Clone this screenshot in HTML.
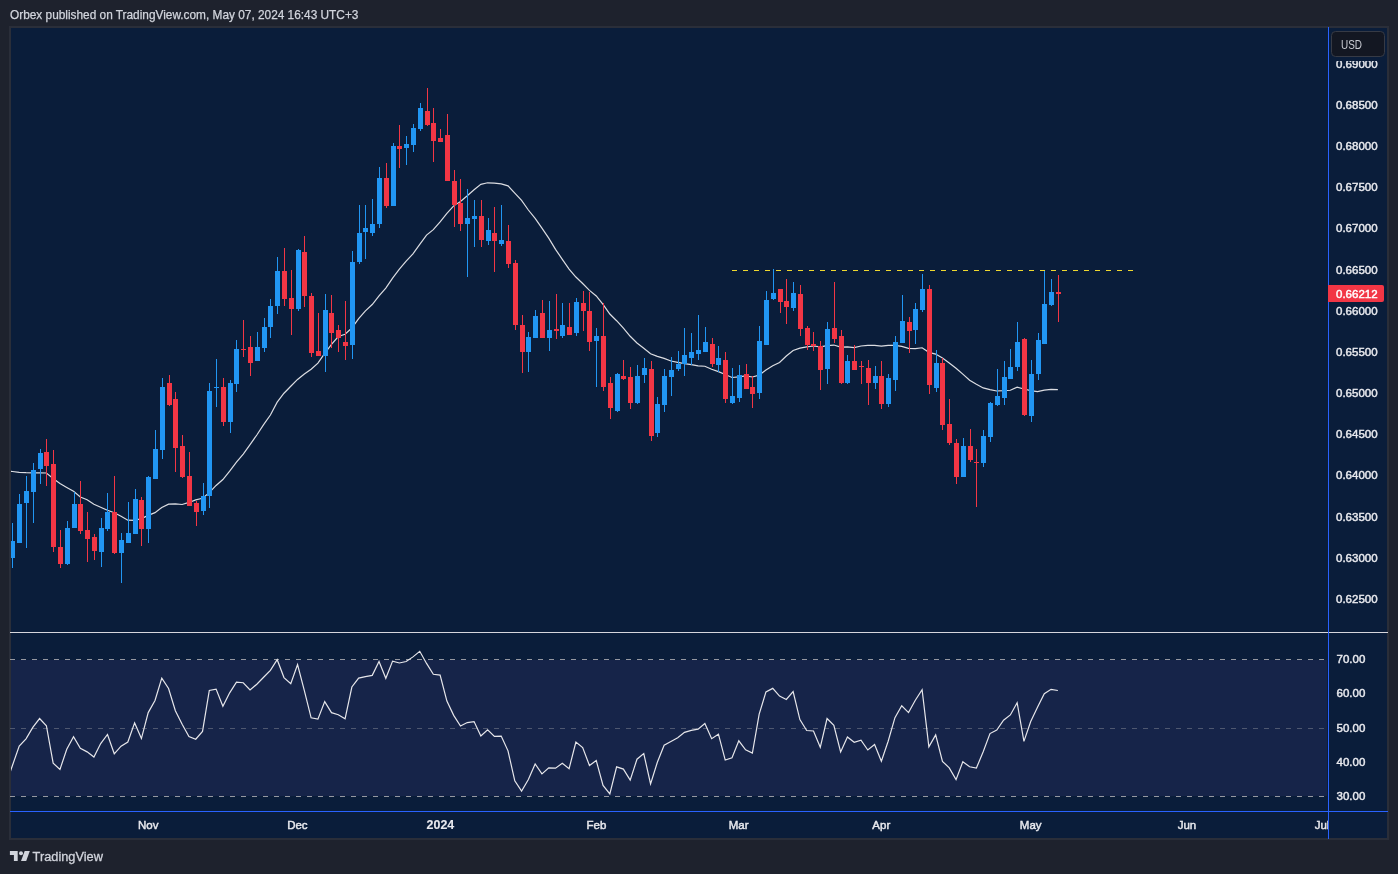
<!DOCTYPE html><html><head><meta charset="utf-8"><style>
html,body{margin:0;padding:0;width:1398px;height:874px;overflow:hidden;background:#1e222d;}
svg{position:absolute;left:0;top:0;will-change:transform;}
text{font-family:"Liberation Sans",sans-serif;}
</style></head><body>
<svg width="1398" height="874" viewBox="0 0 1398 874">
<rect x="0" y="0" width="1398" height="874" fill="#1e222d"/>
<rect x="9" y="26" width="1380" height="814" fill="#2a2e39" shape-rendering="crispEdges"/>
<rect x="11" y="28" width="1376" height="810" fill="#0a1d3a" shape-rendering="crispEdges"/>
<text x="10" y="18.8" font-size="11.85" fill="#d1d4dc" stroke="#d1d4dc" stroke-width="0.25">Orbex published on TradingView.com, May 07, 2024 16:43 UTC+3</text>
<rect x="11" y="660" width="1316" height="136" fill="#162449" shape-rendering="crispEdges"/>
<line x1="10" y1="659.5" x2="1327" y2="659.5" stroke="#9598a1" stroke-width="1" stroke-dasharray="5 6" shape-rendering="crispEdges"/>
<line x1="10" y1="728.5" x2="1327" y2="728.5" stroke="#4f5870" stroke-width="1" stroke-dasharray="5 6" shape-rendering="crispEdges"/>
<line x1="10" y1="796.5" x2="1327" y2="796.5" stroke="#9598a1" stroke-width="1" stroke-dasharray="5 6" shape-rendering="crispEdges"/>
<defs><clipPath id="mp"><rect x="11" y="28" width="1317" height="604"/></clipPath>
<clipPath id="rp"><rect x="11" y="633" width="1317" height="178"/></clipPath>
<clipPath id="tp"><rect x="11" y="812" width="1317" height="26"/></clipPath></defs>
<g clip-path="url(#mp)">
<line x1="732" y1="270.5" x2="1133" y2="270.5" stroke="#efd82f" stroke-width="1" stroke-dasharray="5 6" shape-rendering="crispEdges"/>
<polyline points="5.65,471.30 12.44,471.50 19.23,472.30 26.01,472.70 32.80,472.80 39.59,472.80 46.38,473.00 53.17,478.50 59.96,483.50 66.75,487.50 73.53,491.30 80.32,497.00 87.11,499.80 93.90,504.30 100.69,507.30 107.48,510.30 114.27,512.70 121.05,516.20 127.84,520.20 134.63,520.30 141.42,518.58 148.21,515.38 155.00,512.63 161.78,507.42 168.57,504.17 175.36,503.92 182.15,504.49 188.94,502.44 195.73,499.85 202.52,498.25 209.30,492.61 216.09,485.43 222.88,479.57 229.67,471.18 236.46,462.23 243.25,454.12 250.04,444.64 256.82,434.99 263.61,424.68 270.40,415.03 277.19,402.14 283.98,393.24 290.77,386.25 297.55,379.41 304.34,373.94 311.13,369.18 317.92,363.11 324.71,353.33 331.50,344.41 338.29,336.50 345.07,334.25 351.86,327.99 358.65,318.55 365.44,310.80 372.23,304.55 379.02,295.94 385.81,288.09 392.59,278.04 399.38,269.16 406.17,261.05 412.96,253.89 419.75,244.33 426.54,235.13 433.32,229.66 440.11,221.97 446.90,213.38 453.69,205.84 460.48,201.54 467.27,195.77 474.06,189.68 480.84,184.38 487.63,182.78 494.42,183.18 501.21,183.80 508.00,185.80 514.79,193.16 521.58,200.44 528.36,210.01 535.15,218.36 541.94,228.06 548.73,238.18 555.52,249.32 562.31,259.33 569.09,269.02 575.88,277.03 582.67,283.52 589.46,290.37 596.25,295.97 603.04,304.42 609.83,314.02 616.61,320.72 623.40,328.16 630.19,336.27 636.98,343.04 643.77,348.24 650.56,353.79 657.35,356.40 664.13,358.35 670.92,361.04 677.71,362.32 684.50,363.56 691.29,364.62 698.08,365.87 704.86,366.24 711.65,369.31 718.44,371.66 725.23,374.50 732.02,377.50 738.81,376.92 745.60,375.97 752.38,376.97 759.17,375.08 765.96,369.93 772.75,365.78 779.54,362.51 786.33,356.05 793.12,350.50 799.90,348.14 806.69,346.91 813.48,346.01 820.27,346.77 827.06,345.61 833.85,345.05 840.63,347.10 847.42,346.97 854.21,347.58 861.00,346.00 867.79,345.35 874.58,345.39 881.37,346.14 888.15,345.34 894.94,345.39 901.73,346.44 908.52,348.34 915.31,348.67 922.10,347.77 928.88,352.36 935.67,354.06 942.46,358.06 949.25,362.92 956.04,368.27 962.83,374.13 969.62,380.17 976.40,384.17 983.19,387.93 989.98,389.56 996.77,391.01 1003.56,390.71 1010.35,390.24 1017.14,387.13 1023.92,388.99 1030.71,390.58 1037.50,391.52 1044.29,390.18 1051.08,389.30 1057.87,389.53" fill="none" stroke="#dcdde2" stroke-width="1.2"/>
<g shape-rendering="crispEdges">
<rect x="12" y="523" width="1" height="45" fill="#2196f3"/>
<rect x="10" y="541" width="5" height="17" fill="#2196f3"/>
<rect x="19" y="494" width="1" height="49" fill="#2196f3"/>
<rect x="17" y="504" width="5" height="39" fill="#2196f3"/>
<rect x="26" y="476" width="1" height="72" fill="#2196f3"/>
<rect x="24" y="491" width="5" height="12" fill="#2196f3"/>
<rect x="33" y="463" width="1" height="60" fill="#2196f3"/>
<rect x="31" y="470" width="5" height="22" fill="#2196f3"/>
<rect x="40" y="449" width="1" height="35" fill="#2196f3"/>
<rect x="38" y="453" width="5" height="16" fill="#2196f3"/>
<rect x="46" y="439" width="1" height="47" fill="#f23645"/>
<rect x="44" y="452" width="5" height="14" fill="#f23645"/>
<rect x="53" y="450" width="1" height="102" fill="#f23645"/>
<rect x="51" y="464" width="5" height="83" fill="#f23645"/>
<rect x="60" y="530" width="1" height="38" fill="#f23645"/>
<rect x="58" y="547" width="5" height="17" fill="#f23645"/>
<rect x="67" y="521" width="1" height="44" fill="#2196f3"/>
<rect x="65" y="528" width="5" height="36" fill="#2196f3"/>
<rect x="74" y="492" width="1" height="36" fill="#2196f3"/>
<rect x="72" y="504" width="5" height="24" fill="#2196f3"/>
<rect x="80" y="481" width="1" height="53" fill="#f23645"/>
<rect x="78" y="504" width="5" height="27" fill="#f23645"/>
<rect x="87" y="512" width="1" height="50" fill="#f23645"/>
<rect x="85" y="530" width="5" height="9" fill="#f23645"/>
<rect x="94" y="534" width="1" height="26" fill="#f23645"/>
<rect x="92" y="537" width="5" height="14" fill="#f23645"/>
<rect x="101" y="518" width="1" height="49" fill="#2196f3"/>
<rect x="99" y="528" width="5" height="24" fill="#2196f3"/>
<rect x="107" y="493" width="1" height="38" fill="#2196f3"/>
<rect x="105" y="512" width="5" height="17" fill="#2196f3"/>
<rect x="114" y="476" width="1" height="78" fill="#f23645"/>
<rect x="112" y="512" width="5" height="41" fill="#f23645"/>
<rect x="121" y="533" width="1" height="50" fill="#2196f3"/>
<rect x="119" y="540" width="5" height="13" fill="#2196f3"/>
<rect x="128" y="502" width="1" height="41" fill="#2196f3"/>
<rect x="126" y="533" width="5" height="10" fill="#2196f3"/>
<rect x="135" y="489" width="1" height="45" fill="#2196f3"/>
<rect x="133" y="499" width="5" height="35" fill="#2196f3"/>
<rect x="141" y="497" width="1" height="49" fill="#f23645"/>
<rect x="139" y="500" width="5" height="29" fill="#f23645"/>
<rect x="148" y="476" width="1" height="67" fill="#2196f3"/>
<rect x="146" y="477" width="5" height="52" fill="#2196f3"/>
<rect x="155" y="430" width="1" height="49" fill="#2196f3"/>
<rect x="153" y="449" width="5" height="30" fill="#2196f3"/>
<rect x="162" y="378" width="1" height="81" fill="#2196f3"/>
<rect x="160" y="387" width="5" height="63" fill="#2196f3"/>
<rect x="169" y="375" width="1" height="31" fill="#f23645"/>
<rect x="167" y="383" width="5" height="22" fill="#f23645"/>
<rect x="175" y="392" width="1" height="80" fill="#f23645"/>
<rect x="173" y="399" width="5" height="49" fill="#f23645"/>
<rect x="182" y="435" width="1" height="43" fill="#f23645"/>
<rect x="180" y="446" width="5" height="31" fill="#f23645"/>
<rect x="189" y="452" width="1" height="54" fill="#f23645"/>
<rect x="187" y="476" width="5" height="30" fill="#f23645"/>
<rect x="196" y="501" width="1" height="25" fill="#f23645"/>
<rect x="194" y="503" width="5" height="9" fill="#f23645"/>
<rect x="203" y="483" width="1" height="32" fill="#2196f3"/>
<rect x="201" y="496" width="5" height="15" fill="#2196f3"/>
<rect x="209" y="383" width="1" height="125" fill="#2196f3"/>
<rect x="207" y="391" width="5" height="105" fill="#2196f3"/>
<rect x="216" y="359" width="1" height="48" fill="#2196f3"/>
<rect x="214" y="387" width="5" height="1" fill="#2196f3"/>
<rect x="223" y="378" width="1" height="48" fill="#f23645"/>
<rect x="221" y="387" width="5" height="35" fill="#f23645"/>
<rect x="230" y="380" width="1" height="53" fill="#2196f3"/>
<rect x="228" y="383" width="5" height="39" fill="#2196f3"/>
<rect x="236" y="340" width="1" height="52" fill="#2196f3"/>
<rect x="234" y="349" width="5" height="35" fill="#2196f3"/>
<rect x="243" y="320" width="1" height="37" fill="#f23645"/>
<rect x="241" y="349" width="5" height="1" fill="#f23645"/>
<rect x="250" y="336" width="1" height="40" fill="#f23645"/>
<rect x="248" y="347" width="5" height="16" fill="#f23645"/>
<rect x="257" y="332" width="1" height="29" fill="#2196f3"/>
<rect x="255" y="347" width="5" height="14" fill="#2196f3"/>
<rect x="264" y="318" width="1" height="34" fill="#2196f3"/>
<rect x="262" y="327" width="5" height="21" fill="#2196f3"/>
<rect x="270" y="299" width="1" height="39" fill="#2196f3"/>
<rect x="268" y="306" width="5" height="21" fill="#2196f3"/>
<rect x="277" y="257" width="1" height="57" fill="#2196f3"/>
<rect x="275" y="271" width="5" height="35" fill="#2196f3"/>
<rect x="284" y="248" width="1" height="58" fill="#f23645"/>
<rect x="282" y="271" width="5" height="28" fill="#f23645"/>
<rect x="291" y="270" width="1" height="65" fill="#f23645"/>
<rect x="289" y="298" width="5" height="11" fill="#f23645"/>
<rect x="298" y="249" width="1" height="62" fill="#2196f3"/>
<rect x="296" y="250" width="5" height="59" fill="#2196f3"/>
<rect x="304" y="236" width="1" height="71" fill="#f23645"/>
<rect x="302" y="252" width="5" height="44" fill="#f23645"/>
<rect x="311" y="293" width="1" height="64" fill="#f23645"/>
<rect x="309" y="296" width="5" height="57" fill="#f23645"/>
<rect x="318" y="313" width="1" height="43" fill="#f23645"/>
<rect x="316" y="351" width="5" height="5" fill="#f23645"/>
<rect x="325" y="294" width="1" height="78" fill="#2196f3"/>
<rect x="323" y="310" width="5" height="46" fill="#2196f3"/>
<rect x="331" y="295" width="1" height="53" fill="#f23645"/>
<rect x="329" y="313" width="5" height="20" fill="#f23645"/>
<rect x="338" y="325" width="1" height="27" fill="#f23645"/>
<rect x="336" y="330" width="5" height="8" fill="#f23645"/>
<rect x="345" y="301" width="1" height="59" fill="#f23645"/>
<rect x="343" y="342" width="5" height="4" fill="#f23645"/>
<rect x="352" y="251" width="1" height="108" fill="#2196f3"/>
<rect x="350" y="262" width="5" height="83" fill="#2196f3"/>
<rect x="359" y="205" width="1" height="59" fill="#2196f3"/>
<rect x="357" y="233" width="5" height="29" fill="#2196f3"/>
<rect x="365" y="205" width="1" height="54" fill="#2196f3"/>
<rect x="363" y="228" width="5" height="4" fill="#2196f3"/>
<rect x="372" y="199" width="1" height="37" fill="#2196f3"/>
<rect x="370" y="224" width="5" height="9" fill="#2196f3"/>
<rect x="379" y="167" width="1" height="61" fill="#2196f3"/>
<rect x="377" y="178" width="5" height="46" fill="#2196f3"/>
<rect x="386" y="163" width="1" height="45" fill="#f23645"/>
<rect x="384" y="178" width="5" height="28" fill="#f23645"/>
<rect x="393" y="143" width="1" height="63" fill="#2196f3"/>
<rect x="391" y="146" width="5" height="60" fill="#2196f3"/>
<rect x="399" y="125" width="1" height="43" fill="#f23645"/>
<rect x="397" y="146" width="5" height="3" fill="#f23645"/>
<rect x="406" y="136" width="1" height="29" fill="#2196f3"/>
<rect x="404" y="144" width="5" height="4" fill="#2196f3"/>
<rect x="413" y="124" width="1" height="28" fill="#2196f3"/>
<rect x="411" y="128" width="5" height="17" fill="#2196f3"/>
<rect x="420" y="103" width="1" height="28" fill="#2196f3"/>
<rect x="418" y="108" width="5" height="21" fill="#2196f3"/>
<rect x="427" y="88" width="1" height="38" fill="#f23645"/>
<rect x="425" y="111" width="5" height="14" fill="#f23645"/>
<rect x="433" y="108" width="1" height="54" fill="#f23645"/>
<rect x="431" y="123" width="5" height="18" fill="#f23645"/>
<rect x="440" y="129" width="1" height="13" fill="#f23645"/>
<rect x="438" y="138" width="5" height="4" fill="#f23645"/>
<rect x="447" y="114" width="1" height="67" fill="#f23645"/>
<rect x="445" y="135" width="5" height="46" fill="#f23645"/>
<rect x="454" y="170" width="1" height="57" fill="#f23645"/>
<rect x="452" y="181" width="5" height="24" fill="#f23645"/>
<rect x="460" y="179" width="1" height="52" fill="#f23645"/>
<rect x="458" y="203" width="5" height="21" fill="#f23645"/>
<rect x="467" y="189" width="1" height="88" fill="#2196f3"/>
<rect x="465" y="218" width="5" height="6" fill="#2196f3"/>
<rect x="474" y="200" width="1" height="47" fill="#2196f3"/>
<rect x="472" y="216" width="5" height="3" fill="#2196f3"/>
<rect x="481" y="200" width="1" height="47" fill="#f23645"/>
<rect x="479" y="216" width="5" height="24" fill="#f23645"/>
<rect x="488" y="218" width="1" height="27" fill="#2196f3"/>
<rect x="486" y="230" width="5" height="11" fill="#2196f3"/>
<rect x="494" y="207" width="1" height="65" fill="#f23645"/>
<rect x="492" y="233" width="5" height="8" fill="#f23645"/>
<rect x="501" y="205" width="1" height="41" fill="#2196f3"/>
<rect x="499" y="240" width="5" height="4" fill="#2196f3"/>
<rect x="508" y="225" width="1" height="43" fill="#f23645"/>
<rect x="506" y="241" width="5" height="23" fill="#f23645"/>
<rect x="515" y="260" width="1" height="70" fill="#f23645"/>
<rect x="513" y="263" width="5" height="62" fill="#f23645"/>
<rect x="522" y="315" width="1" height="58" fill="#f23645"/>
<rect x="520" y="325" width="5" height="27" fill="#f23645"/>
<rect x="528" y="332" width="1" height="40" fill="#2196f3"/>
<rect x="526" y="337" width="5" height="15" fill="#2196f3"/>
<rect x="535" y="310" width="1" height="28" fill="#2196f3"/>
<rect x="533" y="316" width="5" height="22" fill="#2196f3"/>
<rect x="542" y="300" width="1" height="38" fill="#f23645"/>
<rect x="540" y="313" width="5" height="25" fill="#f23645"/>
<rect x="549" y="301" width="1" height="50" fill="#2196f3"/>
<rect x="547" y="330" width="5" height="8" fill="#2196f3"/>
<rect x="556" y="294" width="1" height="45" fill="#f23645"/>
<rect x="554" y="329" width="5" height="2" fill="#f23645"/>
<rect x="562" y="303" width="1" height="35" fill="#2196f3"/>
<rect x="560" y="325" width="5" height="11" fill="#2196f3"/>
<rect x="569" y="303" width="1" height="32" fill="#f23645"/>
<rect x="567" y="327" width="5" height="8" fill="#f23645"/>
<rect x="576" y="298" width="1" height="38" fill="#2196f3"/>
<rect x="574" y="302" width="5" height="31" fill="#2196f3"/>
<rect x="583" y="291" width="1" height="40" fill="#f23645"/>
<rect x="581" y="303" width="5" height="8" fill="#f23645"/>
<rect x="589" y="292" width="1" height="59" fill="#f23645"/>
<rect x="587" y="311" width="5" height="31" fill="#f23645"/>
<rect x="596" y="328" width="1" height="59" fill="#2196f3"/>
<rect x="594" y="336" width="5" height="5" fill="#2196f3"/>
<rect x="603" y="303" width="1" height="88" fill="#f23645"/>
<rect x="601" y="336" width="5" height="51" fill="#f23645"/>
<rect x="610" y="377" width="1" height="42" fill="#f23645"/>
<rect x="608" y="383" width="5" height="25" fill="#f23645"/>
<rect x="617" y="373" width="1" height="39" fill="#2196f3"/>
<rect x="615" y="374" width="5" height="37" fill="#2196f3"/>
<rect x="623" y="360" width="1" height="20" fill="#f23645"/>
<rect x="621" y="376" width="5" height="3" fill="#f23645"/>
<rect x="630" y="367" width="1" height="42" fill="#f23645"/>
<rect x="628" y="377" width="5" height="26" fill="#f23645"/>
<rect x="637" y="365" width="1" height="39" fill="#2196f3"/>
<rect x="635" y="376" width="5" height="27" fill="#2196f3"/>
<rect x="644" y="358" width="1" height="25" fill="#2196f3"/>
<rect x="642" y="368" width="5" height="7" fill="#2196f3"/>
<rect x="651" y="361" width="1" height="80" fill="#f23645"/>
<rect x="649" y="369" width="5" height="67" fill="#f23645"/>
<rect x="657" y="397" width="1" height="40" fill="#2196f3"/>
<rect x="655" y="404" width="5" height="29" fill="#2196f3"/>
<rect x="664" y="369" width="1" height="43" fill="#2196f3"/>
<rect x="662" y="376" width="5" height="29" fill="#2196f3"/>
<rect x="671" y="357" width="1" height="39" fill="#2196f3"/>
<rect x="669" y="370" width="5" height="7" fill="#2196f3"/>
<rect x="678" y="351" width="1" height="20" fill="#2196f3"/>
<rect x="676" y="364" width="5" height="5" fill="#2196f3"/>
<rect x="684" y="328" width="1" height="48" fill="#2196f3"/>
<rect x="682" y="355" width="5" height="9" fill="#2196f3"/>
<rect x="691" y="333" width="1" height="32" fill="#2196f3"/>
<rect x="689" y="352" width="5" height="6" fill="#2196f3"/>
<rect x="698" y="315" width="1" height="45" fill="#2196f3"/>
<rect x="696" y="350" width="5" height="4" fill="#2196f3"/>
<rect x="705" y="327" width="1" height="25" fill="#2196f3"/>
<rect x="703" y="342" width="5" height="10" fill="#2196f3"/>
<rect x="712" y="338" width="1" height="29" fill="#f23645"/>
<rect x="710" y="344" width="5" height="20" fill="#f23645"/>
<rect x="718" y="346" width="1" height="26" fill="#2196f3"/>
<rect x="716" y="358" width="5" height="7" fill="#2196f3"/>
<rect x="725" y="352" width="1" height="51" fill="#f23645"/>
<rect x="723" y="360" width="5" height="39" fill="#f23645"/>
<rect x="732" y="368" width="1" height="36" fill="#2196f3"/>
<rect x="730" y="396" width="5" height="7" fill="#2196f3"/>
<rect x="739" y="365" width="1" height="37" fill="#2196f3"/>
<rect x="737" y="375" width="5" height="23" fill="#2196f3"/>
<rect x="746" y="364" width="1" height="25" fill="#f23645"/>
<rect x="744" y="374" width="5" height="15" fill="#f23645"/>
<rect x="752" y="376" width="1" height="32" fill="#f23645"/>
<rect x="750" y="387" width="5" height="7" fill="#f23645"/>
<rect x="759" y="326" width="1" height="73" fill="#2196f3"/>
<rect x="757" y="341" width="5" height="52" fill="#2196f3"/>
<rect x="766" y="291" width="1" height="54" fill="#2196f3"/>
<rect x="764" y="300" width="5" height="45" fill="#2196f3"/>
<rect x="773" y="269" width="1" height="31" fill="#2196f3"/>
<rect x="771" y="293" width="5" height="6" fill="#2196f3"/>
<rect x="780" y="289" width="1" height="24" fill="#f23645"/>
<rect x="778" y="289" width="5" height="13" fill="#f23645"/>
<rect x="786" y="279" width="1" height="45" fill="#f23645"/>
<rect x="784" y="301" width="5" height="6" fill="#f23645"/>
<rect x="793" y="282" width="1" height="29" fill="#2196f3"/>
<rect x="791" y="293" width="5" height="15" fill="#2196f3"/>
<rect x="800" y="285" width="1" height="51" fill="#f23645"/>
<rect x="798" y="294" width="5" height="35" fill="#f23645"/>
<rect x="807" y="326" width="1" height="24" fill="#f23645"/>
<rect x="805" y="328" width="5" height="17" fill="#f23645"/>
<rect x="813" y="332" width="1" height="19" fill="#f23645"/>
<rect x="811" y="344" width="5" height="2" fill="#f23645"/>
<rect x="820" y="341" width="1" height="49" fill="#f23645"/>
<rect x="818" y="346" width="5" height="24" fill="#f23645"/>
<rect x="827" y="322" width="1" height="62" fill="#2196f3"/>
<rect x="825" y="329" width="5" height="40" fill="#2196f3"/>
<rect x="834" y="282" width="1" height="61" fill="#f23645"/>
<rect x="832" y="328" width="5" height="11" fill="#f23645"/>
<rect x="841" y="330" width="1" height="54" fill="#f23645"/>
<rect x="839" y="336" width="5" height="47" fill="#f23645"/>
<rect x="847" y="355" width="1" height="29" fill="#2196f3"/>
<rect x="845" y="361" width="5" height="22" fill="#2196f3"/>
<rect x="854" y="345" width="1" height="25" fill="#f23645"/>
<rect x="852" y="361" width="5" height="9" fill="#f23645"/>
<rect x="861" y="361" width="1" height="23" fill="#f23645"/>
<rect x="859" y="366" width="5" height="1" fill="#f23645"/>
<rect x="868" y="360" width="1" height="45" fill="#f23645"/>
<rect x="866" y="368" width="5" height="15" fill="#f23645"/>
<rect x="875" y="366" width="1" height="23" fill="#2196f3"/>
<rect x="873" y="376" width="5" height="7" fill="#2196f3"/>
<rect x="881" y="361" width="1" height="48" fill="#f23645"/>
<rect x="879" y="376" width="5" height="28" fill="#f23645"/>
<rect x="888" y="374" width="1" height="33" fill="#2196f3"/>
<rect x="886" y="378" width="5" height="26" fill="#2196f3"/>
<rect x="895" y="336" width="1" height="55" fill="#2196f3"/>
<rect x="893" y="342" width="5" height="38" fill="#2196f3"/>
<rect x="902" y="295" width="1" height="48" fill="#2196f3"/>
<rect x="900" y="321" width="5" height="22" fill="#2196f3"/>
<rect x="909" y="317" width="1" height="36" fill="#f23645"/>
<rect x="907" y="322" width="5" height="9" fill="#f23645"/>
<rect x="915" y="303" width="1" height="41" fill="#2196f3"/>
<rect x="913" y="309" width="5" height="21" fill="#2196f3"/>
<rect x="922" y="274" width="1" height="38" fill="#2196f3"/>
<rect x="920" y="289" width="5" height="21" fill="#2196f3"/>
<rect x="929" y="285" width="1" height="109" fill="#f23645"/>
<rect x="927" y="289" width="5" height="96" fill="#f23645"/>
<rect x="936" y="350" width="1" height="42" fill="#2196f3"/>
<rect x="934" y="363" width="5" height="25" fill="#2196f3"/>
<rect x="942" y="358" width="1" height="72" fill="#f23645"/>
<rect x="940" y="363" width="5" height="62" fill="#f23645"/>
<rect x="949" y="399" width="1" height="46" fill="#f23645"/>
<rect x="947" y="424" width="5" height="19" fill="#f23645"/>
<rect x="956" y="439" width="1" height="45" fill="#f23645"/>
<rect x="954" y="443" width="5" height="34" fill="#f23645"/>
<rect x="963" y="438" width="1" height="39" fill="#2196f3"/>
<rect x="961" y="446" width="5" height="31" fill="#2196f3"/>
<rect x="970" y="429" width="1" height="33" fill="#f23645"/>
<rect x="968" y="446" width="5" height="14" fill="#f23645"/>
<rect x="976" y="449" width="1" height="58" fill="#f23645"/>
<rect x="974" y="462" width="5" height="1" fill="#f23645"/>
<rect x="983" y="430" width="1" height="37" fill="#2196f3"/>
<rect x="981" y="436" width="5" height="27" fill="#2196f3"/>
<rect x="990" y="402" width="1" height="40" fill="#2196f3"/>
<rect x="988" y="403" width="5" height="34" fill="#2196f3"/>
<rect x="997" y="369" width="1" height="37" fill="#2196f3"/>
<rect x="995" y="396" width="5" height="9" fill="#2196f3"/>
<rect x="1004" y="361" width="1" height="44" fill="#2196f3"/>
<rect x="1002" y="377" width="5" height="21" fill="#2196f3"/>
<rect x="1010" y="349" width="1" height="30" fill="#2196f3"/>
<rect x="1008" y="367" width="5" height="12" fill="#2196f3"/>
<rect x="1017" y="322" width="1" height="49" fill="#2196f3"/>
<rect x="1015" y="342" width="5" height="25" fill="#2196f3"/>
<rect x="1024" y="338" width="1" height="78" fill="#f23645"/>
<rect x="1022" y="339" width="5" height="76" fill="#f23645"/>
<rect x="1031" y="360" width="1" height="62" fill="#2196f3"/>
<rect x="1029" y="374" width="5" height="42" fill="#2196f3"/>
<rect x="1038" y="333" width="1" height="47" fill="#2196f3"/>
<rect x="1036" y="340" width="5" height="34" fill="#2196f3"/>
<rect x="1044" y="271" width="1" height="73" fill="#2196f3"/>
<rect x="1042" y="304" width="5" height="40" fill="#2196f3"/>
<rect x="1051" y="279" width="1" height="27" fill="#2196f3"/>
<rect x="1049" y="292" width="5" height="13" fill="#2196f3"/>
<rect x="1058" y="275" width="1" height="47" fill="#f23645"/>
<rect x="1056" y="292" width="5" height="2" fill="#f23645"/>
</g>
</g>
<g clip-path="url(#rp)">
<polyline points="5.65,785.00 12.44,765.50 19.23,746.00 26.01,738.83 32.80,727.39 39.59,718.52 46.38,725.75 53.17,763.11 59.96,769.41 66.75,749.22 73.53,736.67 80.32,748.37 87.11,751.86 93.90,757.06 100.69,743.55 107.48,734.48 114.27,753.81 121.05,746.16 127.84,741.99 134.63,722.89 141.42,738.53 148.21,712.59 155.00,700.52 161.78,678.19 168.57,688.48 175.36,710.79 182.15,724.30 188.94,736.56 195.73,739.20 202.52,731.45 209.30,690.43 216.09,689.15 222.88,706.28 229.67,692.83 236.46,682.20 243.25,682.74 250.04,689.94 256.82,684.21 263.61,677.27 270.40,670.37 277.19,659.67 283.98,677.57 290.77,683.74 297.55,664.51 304.34,690.67 311.13,717.85 317.92,719.14 324.71,701.64 331.50,712.65 338.29,714.74 345.07,718.85 351.86,687.00 358.65,678.12 365.44,676.58 372.23,675.36 379.02,661.48 385.81,678.32 392.59,661.10 399.38,663.00 406.17,661.53 412.96,656.88 419.75,651.30 426.54,663.42 433.32,674.24 440.11,675.08 446.90,701.11 453.69,715.37 460.48,726.01 467.27,722.58 474.06,721.61 480.84,736.06 487.63,729.72 494.42,736.39 501.21,736.04 508.00,750.87 514.79,780.76 521.58,791.05 528.36,779.57 535.15,763.93 541.94,773.85 548.73,767.78 555.52,768.13 562.31,763.37 569.09,768.69 575.88,742.07 582.67,747.53 589.46,765.50 596.25,760.57 603.04,785.37 609.83,793.96 616.61,766.82 623.40,769.09 630.19,780.13 636.98,759.21 643.77,753.61 650.56,783.92 657.35,762.20 664.13,745.20 670.92,741.55 677.71,737.72 684.50,732.30 691.29,730.43 698.08,729.14 704.86,723.50 711.65,738.64 718.44,734.18 725.23,760.07 732.02,757.83 738.81,740.81 745.60,749.87 752.38,753.08 759.17,714.18 765.96,691.90 772.75,688.37 779.54,696.03 786.33,699.50 793.12,691.50 799.90,719.61 806.69,730.54 813.48,730.96 820.27,747.28 827.06,718.55 833.85,725.43 840.63,751.89 847.42,736.99 854.21,742.32 861.00,740.20 867.79,749.98 874.58,744.52 881.37,761.22 888.15,741.25 894.94,717.69 901.73,705.72 908.52,712.59 915.31,700.24 922.10,689.72 928.88,746.86 935.67,734.91 942.46,761.38 949.25,767.89 956.04,779.67 962.83,761.73 969.62,766.76 976.40,768.06 983.19,751.75 989.98,733.56 996.77,730.12 1003.56,720.24 1010.35,714.92 1017.14,702.67 1023.92,741.37 1030.71,721.59 1037.50,707.31 1044.29,693.75 1051.08,689.35 1057.87,690.52" fill="none" stroke="#e6e6ea" stroke-width="1.2" stroke-linejoin="miter"/>
</g>
<rect x="10" y="632" width="1378" height="1" fill="#d6d6dc" shape-rendering="crispEdges"/>
<rect x="10" y="811" width="1378" height="1" fill="#2962ff" shape-rendering="crispEdges"/>
<rect x="1328" y="27" width="1" height="812" fill="#2962ff" shape-rendering="crispEdges"/>
<text x="1336" y="602.8" font-size="11.5" fill="#e8e9ee" stroke="#e8e9ee" stroke-width="0.45">0.62500</text>
<text x="1336" y="561.6" font-size="11.5" fill="#e8e9ee" stroke="#e8e9ee" stroke-width="0.45">0.63000</text>
<text x="1336" y="520.5" font-size="11.5" fill="#e8e9ee" stroke="#e8e9ee" stroke-width="0.45">0.63500</text>
<text x="1336" y="479.3" font-size="11.5" fill="#e8e9ee" stroke="#e8e9ee" stroke-width="0.45">0.64000</text>
<text x="1336" y="438.2" font-size="11.5" fill="#e8e9ee" stroke="#e8e9ee" stroke-width="0.45">0.64500</text>
<text x="1336" y="397.0" font-size="11.5" fill="#e8e9ee" stroke="#e8e9ee" stroke-width="0.45">0.65000</text>
<text x="1336" y="355.8" font-size="11.5" fill="#e8e9ee" stroke="#e8e9ee" stroke-width="0.45">0.65500</text>
<text x="1336" y="314.7" font-size="11.5" fill="#e8e9ee" stroke="#e8e9ee" stroke-width="0.45">0.66000</text>
<text x="1336" y="273.5" font-size="11.5" fill="#e8e9ee" stroke="#e8e9ee" stroke-width="0.45">0.66500</text>
<text x="1336" y="232.4" font-size="11.5" fill="#e8e9ee" stroke="#e8e9ee" stroke-width="0.45">0.67000</text>
<text x="1336" y="191.2" font-size="11.5" fill="#e8e9ee" stroke="#e8e9ee" stroke-width="0.45">0.67500</text>
<text x="1336" y="150.1" font-size="11.5" fill="#e8e9ee" stroke="#e8e9ee" stroke-width="0.45">0.68000</text>
<text x="1336" y="108.9" font-size="11.5" fill="#e8e9ee" stroke="#e8e9ee" stroke-width="0.45">0.68500</text>
<text x="1336" y="67.8" font-size="11.5" fill="#e8e9ee" stroke="#e8e9ee" stroke-width="0.45">0.69000</text>
<rect x="1329" y="28" width="58" height="33" fill="#0a1d3a"/>
<rect x="1331.5" y="31.5" width="53" height="25" rx="4" fill="#131722" stroke="#363a45" stroke-width="1"/>
<text x="1341" y="48.7" font-size="12" fill="#c9cbd2" textLength="21" lengthAdjust="spacingAndGlyphs">USD</text>
<path d="M1328 285H1382A2 2 0 0 1 1384 287V300A2 2 0 0 1 1382 302H1328Z" fill="#f23645"/>
<text x="1336" y="297.6" font-size="11.5" fill="#ffffff" stroke="#ffffff" stroke-width="0.45">0.66212</text>
<text x="1336.5" y="663.3" font-size="11.5" fill="#e8e9ee" stroke="#e8e9ee" stroke-width="0.45">70.00</text>
<text x="1336.5" y="697.4" font-size="11.5" fill="#e8e9ee" stroke="#e8e9ee" stroke-width="0.45">60.00</text>
<text x="1336.5" y="731.5" font-size="11.5" fill="#e8e9ee" stroke="#e8e9ee" stroke-width="0.45">50.00</text>
<text x="1336.5" y="765.6" font-size="11.5" fill="#e8e9ee" stroke="#e8e9ee" stroke-width="0.45">40.00</text>
<text x="1336.5" y="799.7" font-size="11.5" fill="#e8e9ee" stroke="#e8e9ee" stroke-width="0.45">30.00</text>
<g clip-path="url(#tp)">
<text x="148.3" y="829" font-size="11.5" text-anchor="middle" fill="#e8e9ee" stroke="#e8e9ee" stroke-width="0.45">Nov</text>
<text x="297.4" y="829" font-size="11.5" text-anchor="middle" fill="#e8e9ee" stroke="#e8e9ee" stroke-width="0.45">Dec</text>
<text x="440.4" y="829" font-size="12.4" text-anchor="middle" fill="#e8e9ee" stroke="#e8e9ee" stroke-width="0.1" font-weight="bold">2024</text>
<text x="596.4" y="829" font-size="11.5" text-anchor="middle" fill="#e8e9ee" stroke="#e8e9ee" stroke-width="0.45">Feb</text>
<text x="738.6" y="829" font-size="11.5" text-anchor="middle" fill="#e8e9ee" stroke="#e8e9ee" stroke-width="0.45">Mar</text>
<text x="881.3" y="829" font-size="11.5" text-anchor="middle" fill="#e8e9ee" stroke="#e8e9ee" stroke-width="0.45">Apr</text>
<text x="1030.7" y="829" font-size="11.5" text-anchor="middle" fill="#e8e9ee" stroke="#e8e9ee" stroke-width="0.45">May</text>
<text x="1187.0" y="829" font-size="11.5" text-anchor="middle" fill="#e8e9ee" stroke="#e8e9ee" stroke-width="0.45">Jun</text>
<text x="1322.0" y="829" font-size="11.5" text-anchor="middle" fill="#e8e9ee" stroke="#e8e9ee" stroke-width="0.45">Jul</text>
</g>
<g fill="#d1d4dc">
<path d="M9.9 851H17.7V860.9H13.9V855H9.9Z"/>
<circle cx="21" cy="853.2" r="2"/>
<path d="M24.7 851H29.8L26.2 860.9H21Z"/>
</g>
<text x="32.6" y="860.7" font-size="12.5" fill="#d1d4dc" stroke="#d1d4dc" stroke-width="0.3" textLength="70.3" lengthAdjust="spacingAndGlyphs">TradingView</text>
</svg></body></html>
